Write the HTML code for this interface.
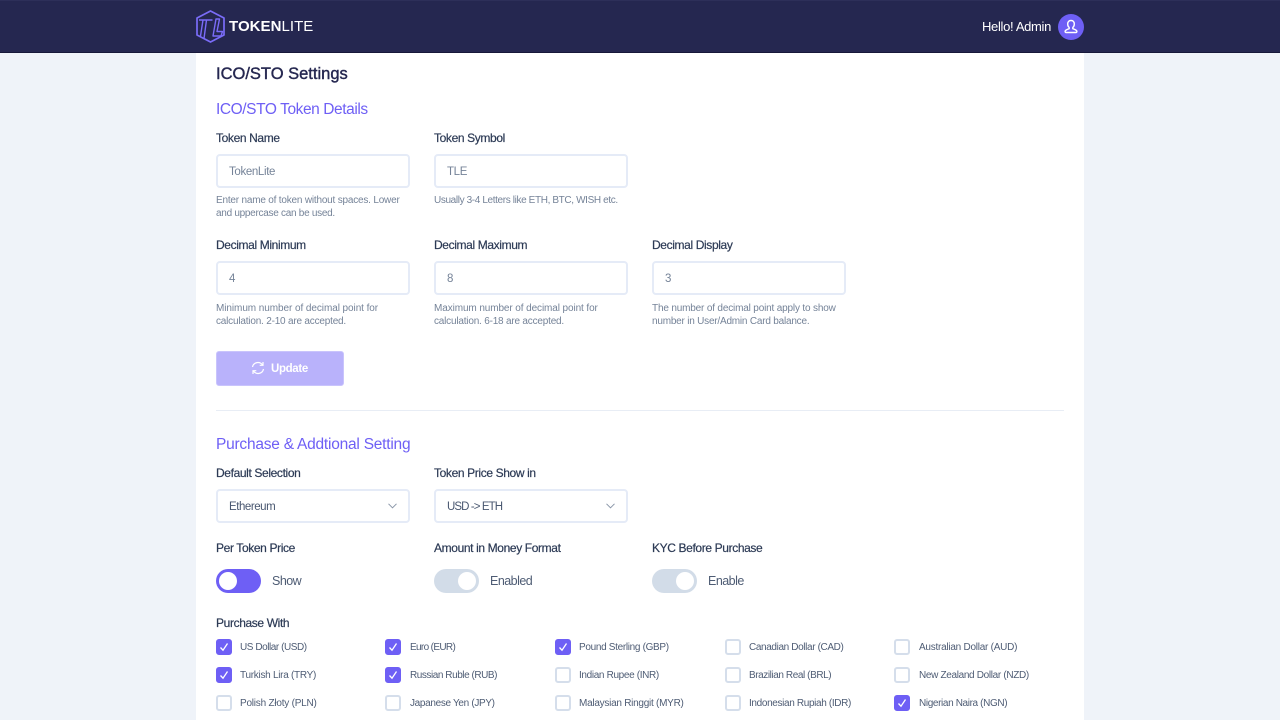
<!DOCTYPE html>
<html lang="en"><head><meta charset="utf-8"><title>ICO/STO Settings</title>
<style>
*{box-sizing:border-box}
html,body{margin:0;padding:0;width:1280px;height:720px;overflow:hidden;background:#eff3f9;font-family:"Liberation Sans",sans-serif}
.a{position:absolute;white-space:nowrap}
.l{display:block}
#top{left:0;top:0;width:1280px;height:53px;background:#252750;border-bottom:1px solid #17183a;border-top:1px solid #2d2f59}
#card{left:196px;top:53px;width:888px;height:667px;background:#fff}
.lb{font-size:12px;color:#2c3a55;letter-spacing:-.37px;-webkit-text-stroke:.2px #2c3a55;line-height:16px}
.in{width:194px;height:34px;background:#fff;border:2px solid #e5ebf7;border-radius:4px;font-size:11.5px;color:#758398;line-height:32px;padding-left:11px;letter-spacing:-.35px}
.h{font-size:10px;color:#758398;line-height:12.5px;margin-top:1px}
.sec{font-size:15.5px;color:#6e5ff5;line-height:20px;margin-top:1px}
.cb{width:16px;height:16px;border:2px solid #d5deeb;border-radius:3px;background:#fff}
.cb.on{background:#6e5ff5;border-color:#6e5ff5}
.cb svg{position:absolute;left:0;top:0}
.ct{font-size:10px;color:#4e5c74;line-height:14px;margin-top:1px}
.tg{width:45px;height:24px;border-radius:12px}
.kn{position:absolute;top:3px;width:18px;height:18px;border-radius:50%;background:#fff}
.tl{font-size:12.5px;color:#4e5c74;line-height:16px;letter-spacing:-.52px}
.ar{position:absolute;right:11px;top:12px}
</style></head><body>
<div id="top" class="a"></div>
<svg class="a" style="left:196px;top:10px" width="30" height="33" viewBox="0 0 30 33" fill="none" stroke="#7a6cf8" stroke-width="1.700" stroke-linejoin="round"><path d="M14.500 1 28 8v17l-13.500 7L1 25V8z"/><path d="M3 10h13.500M7 10 4.500 26M10.500 10 8 28.500M20 9l-3 17h8l1.500-4.500h-5.500L23.500 9z" stroke-width="1.400"/></svg>
<div class="a" style="left:229px;top:17px;font-size:15px;line-height:20px;color:#fff;letter-spacing:.05px"><b>TOKEN</b>LITE</div>
<div class="a" style="left:982px;top:19px;font-size:13px;line-height:16px;color:#fff;letter-spacing:-.33px">Hello! Admin</div>
<div class="a" style="left:1058px;top:14px;width:26px;height:26px;border-radius:50%;background:#6e5ff5"></div>
<svg class="a" style="left:1058px;top:14px" width="26" height="26" viewBox="0 0 26 26" fill="none" stroke="#fff" stroke-width="1.400" stroke-linejoin="round"><path d="M13 6.500c-2.200 0-3.300 1.500-3.300 3.500 0 1.500.6 2.800 1.500 3.500v1.200c-1.800.6-3.400 1.200-4 2.300-.3.600 0 1.500.8 1.500h10c.8 0 1.100-.9.800-1.500-.6-1.100-2.200-1.700-4-2.300v-1.200c.9-.7 1.500-2 1.500-3.500 0-2-1.100-3.500-3.300-3.500z"/></svg>

<div id="card" class="a"></div>
<div class="a" style="left:216px;top:64px;font-size:16.500px;line-height:20px;color:#252750;-webkit-text-stroke:.4px #252750">ICO/STO Settings</div>
<div class="a sec" style="left:216px;top:99px;letter-spacing:-.42px">ICO/STO Token Details</div>

<div class="a lb" style="left:216px;top:130px">Token Name</div>
<div class="a lb" style="left:434px;top:130px">Token Symbol</div>
<div class="a in" style="left:216px;top:154px">TokenLite</div>
<div class="a in" style="left:434px;top:154px">TLE</div>
<div class="a h" style="left:216px;top:194px"><span class="l" style="letter-spacing:-.2px">Enter name of token without spaces. Lower</span><span class="l" style="letter-spacing:-.28px">and uppercase can be used.</span></div>
<div class="a h" style="left:434px;top:194px;letter-spacing:-.37px">Usually 3-4 Letters like ETH, BTC, WISH etc.</div>

<div class="a lb" style="left:216px;top:237px">Decimal Minimum</div>
<div class="a lb" style="left:434px;top:237px">Decimal Maximum</div>
<div class="a lb" style="left:652px;top:237px">Decimal Display</div>
<div class="a in" style="left:216px;top:261px">4</div>
<div class="a in" style="left:434px;top:261px">8</div>
<div class="a in" style="left:652px;top:261px">3</div>
<div class="a h" style="left:216px;top:302px"><span class="l" style="letter-spacing:-.07px">Minimum number of decimal point for</span><span class="l" style="letter-spacing:-.2px">calculation. 2-10 are accepted.</span></div>
<div class="a h" style="left:434px;top:302px"><span class="l" style="letter-spacing:-.1px">Maximum number of decimal point for</span><span class="l" style="letter-spacing:-.2px">calculation. 6-18 are accepted.</span></div>
<div class="a h" style="left:652px;top:302px"><span class="l" style="letter-spacing:-.17px">The number of decimal point apply to show</span><span class="l" style="letter-spacing:-.21px">number in User/Admin Card balance.</span></div>

<div class="a" style="left:216px;top:351px;width:128px;height:35px;background:#b9b2fb;border-radius:3px;border:1px solid #c9c4fc"></div>
<svg class="a" style="left:251px;top:361px" width="14" height="14" viewBox="0 0 14 14" fill="none" stroke="#fff" stroke-width="1.200"><path d="M1.500 6a5.500 5.500 0 0 1 10-2M12.500 8a5.500 5.500 0 0 1-10 2"/><path d="M12 1v3.300H8.700M2 13V9.700h3.300"/></svg>
<div class="a" style="left:271px;top:362px;font-size:11.500px;line-height:15px;font-weight:700;color:#fff;letter-spacing:-.35px">Update</div>

<div class="a" style="left:216px;top:410px;width:848px;height:1px;background:#e8edf5"></div>
<div class="a sec" style="left:216px;top:434px;letter-spacing:-.23px">Purchase &amp; Addtional Setting</div>

<div class="a lb" style="left:216px;top:465px">Default Selection</div>
<div class="a lb" style="left:434px;top:465px">Token Price Show in</div>
<div class="a in" style="left:216px;top:489px;color:#495770;letter-spacing:-.45px">Ethereum<svg class="ar" width="9" height="6" viewBox="0 0 9 6" fill="none" stroke="#8a96a8"><path d="M.5.800 4.500 4.800 8.500.800"/></svg></div>
<div class="a in" style="left:434px;top:489px;color:#495770;letter-spacing:-.9px">USD -&gt; ETH<svg class="ar" width="9" height="6" viewBox="0 0 9 6" fill="none" stroke="#8a96a8"><path d="M.5.800 4.500 4.800 8.500.800"/></svg></div>

<div class="a lb" style="left:216px;top:540px">Per Token Price</div>
<div class="a lb" style="left:434px;top:540px">Amount in Money Format</div>
<div class="a lb" style="left:652px;top:540px">KYC Before Purchase</div>

<div class="a tg" style="left:216px;top:569px;background:#6e5ff5"><span class="kn" style="left:3px"></span></div>
<div class="a tl" style="left:272px;top:573px">Show</div>
<div class="a tg" style="left:434px;top:569px;background:#d2dce8"><span class="kn" style="left:24px"></span></div>
<div class="a tl" style="left:490px;top:573px">Enabled</div>
<div class="a tg" style="left:652px;top:569px;background:#d2dce8"><span class="kn" style="left:24px"></span></div>
<div class="a tl" style="left:708px;top:573px">Enable</div>

<div class="a lb" style="left:216px;top:615px">Purchase With</div>

<div class="a cb on" style="left:216px;top:639px"><svg width="12" height="12" viewBox="0 0 12 12" fill="none" stroke="#fff" stroke-width="1.300"><path d="M2.500 6.500 5 9.200 9.500 2.500"/></svg></div><div class="a ct" style="left:240px;top:640px;letter-spacing:-.45px">US Dollar (USD)</div>
<div class="a cb on" style="left:385px;top:639px"><svg width="12" height="12" viewBox="0 0 12 12" fill="none" stroke="#fff" stroke-width="1.300"><path d="M2.500 6.500 5 9.200 9.500 2.500"/></svg></div><div class="a ct" style="left:410px;top:640px;letter-spacing:-.65px">Euro (EUR)</div>
<div class="a cb on" style="left:555px;top:639px"><svg width="12" height="12" viewBox="0 0 12 12" fill="none" stroke="#fff" stroke-width="1.300"><path d="M2.500 6.500 5 9.200 9.500 2.500"/></svg></div><div class="a ct" style="left:579px;top:640px;letter-spacing:-.32px">Pound Sterling (GBP)</div>
<div class="a cb" style="left:725px;top:639px"></div><div class="a ct" style="left:749px;top:640px;letter-spacing:-.37px">Canadian Dollar (CAD)</div>
<div class="a cb" style="left:894px;top:639px"></div><div class="a ct" style="left:919px;top:640px;letter-spacing:-.25px">Australian Dollar (AUD)</div>

<div class="a cb on" style="left:216px;top:667px"><svg width="12" height="12" viewBox="0 0 12 12" fill="none" stroke="#fff" stroke-width="1.300"><path d="M2.500 6.500 5 9.200 9.500 2.500"/></svg></div><div class="a ct" style="left:240px;top:668px;letter-spacing:-.28px">Turkish Lira (TRY)</div>
<div class="a cb on" style="left:385px;top:667px"><svg width="12" height="12" viewBox="0 0 12 12" fill="none" stroke="#fff" stroke-width="1.300"><path d="M2.500 6.500 5 9.200 9.500 2.500"/></svg></div><div class="a ct" style="left:410px;top:668px;letter-spacing:-.45px">Russian Ruble (RUB)</div>
<div class="a cb" style="left:555px;top:667px"></div><div class="a ct" style="left:579px;top:668px;letter-spacing:-.35px">Indian Rupee (INR)</div>
<div class="a cb" style="left:725px;top:667px"></div><div class="a ct" style="left:749px;top:668px;letter-spacing:-.42px">Brazilian Real (BRL)</div>
<div class="a cb" style="left:894px;top:667px"></div><div class="a ct" style="left:919px;top:668px;letter-spacing:-.33px">New Zealand Dollar (NZD)</div>

<div class="a cb" style="left:216px;top:695px"></div><div class="a ct" style="left:240px;top:696px;letter-spacing:-.22px">Polish Złoty (PLN)</div>
<div class="a cb" style="left:385px;top:695px"></div><div class="a ct" style="left:410px;top:696px;letter-spacing:-.33px">Japanese Yen (JPY)</div>
<div class="a cb" style="left:555px;top:695px"></div><div class="a ct" style="left:579px;top:696px;letter-spacing:-.26px">Malaysian Ringgit (MYR)</div>
<div class="a cb" style="left:725px;top:695px"></div><div class="a ct" style="left:749px;top:696px;letter-spacing:-.35px">Indonesian Rupiah (IDR)</div>
<div class="a cb on" style="left:894px;top:695px"><svg width="12" height="12" viewBox="0 0 12 12" fill="none" stroke="#fff" stroke-width="1.300"><path d="M2.500 6.500 5 9.200 9.500 2.500"/></svg></div><div class="a ct" style="left:919px;top:696px;letter-spacing:-.37px">Nigerian Naira (NGN)</div>
</body></html>
